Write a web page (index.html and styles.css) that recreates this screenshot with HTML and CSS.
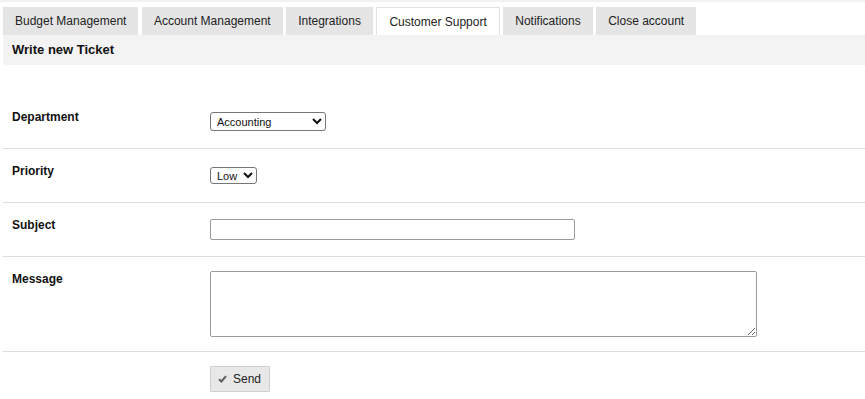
FILE: index.html
```html
<!DOCTYPE html>
<html lang="en">
<head>
    <meta charset="UTF-8">
    <meta name="viewport" content="width=device-width, initial-scale=1.0">
    <title>Customer Support</title>
    <link rel="stylesheet" href="styles.css">
</head>
<body>
    <div class="top-strip"></div>

    <div class="page">
        <nav class="tabs">
            <div class="tab">Budget Management</div>
            <div class="tab">Account Management</div>
            <div class="tab">Integrations</div>
            <div class="tab active">Customer Support</div>
            <div class="tab">Notifications</div>
            <div class="tab">Close account</div>
        </nav>

        <div class="panel-head">Write new Ticket</div>

        <form class="ticket-form" onsubmit="return false;">
            <div class="row">
                <label class="label" for="department">Department</label>
                <div class="field">
                    <select id="department" class="sel sel-dept">
                        <option>Accounting</option>
                        <option>Technical Support</option>
                        <option>Sales</option>
                    </select>
                </div>
            </div>
            <div class="row">
                <label class="label" for="priority">Priority</label>
                <div class="field">
                    <select id="priority" class="sel sel-prio">
                        <option>Low</option>
                        <option>Medium</option>
                        <option>High</option>
                    </select>
                </div>
            </div>
            <div class="row">
                <label class="label" for="subject">Subject</label>
                <div class="field">
                    <input id="subject" class="text-input" type="text">
                </div>
            </div>
            <div class="row">
                <label class="label" for="message">Message</label>
                <div class="field">
                    <textarea id="message" class="text-area"></textarea>
                </div>
            </div>
            <div class="row row-last">
                <div class="label"></div>
                <div class="field">
                    <button class="btn" type="submit">
                        <svg class="check" width="9" height="8" viewBox="0 0 9 8">
                            <path d="M1 4.2 L3.4 6.5 L8 1.2" fill="none" stroke="#5f5f5f" stroke-width="2"/>
                        </svg>
                        Send
                    </button>
                </div>
            </div>
        </form>
    </div>
</body>
</html>
```

FILE: styles.css
```css
body {
    margin: 0;
    font-family: Arial, 'Liberation Sans', sans-serif;
    font-size: 12px;
    color: #222;
    background-color: #fff;
}
.top-strip {
    height: 2px;
    background-color: #f2f2f2;
}
.page {
    padding-left: 3px;
}
.tabs {
    display: flex;
    gap: 3.5px;
    padding-top: 5px;
}
.tab {
    height: 28px;
    line-height: 29px;
    padding: 0 12px;
    background-color: #e5e5e5;
    color: #222;
    box-sizing: border-box;
    cursor: pointer;
}
.tab.active {
    background-color: #fff;
    border: 1px solid #e2e2e2;
    border-bottom: none;
    line-height: 28px;
}
.panel-head {
    height: 30px;
    line-height: 29px;
    padding-left: 9px;
    background-color: #f3f3f3;
    border-bottom-left-radius: 3px;
    font-size: 13px;
    font-weight: bold;
    color: #111;
}
.ticket-form {
    margin-top: 30px;
}
.row {
    display: flex;
    align-items: center;
    min-height: 54px;
    box-sizing: border-box;
    padding: 14px 0;
    border-bottom: 1px solid #dedede;
}
.row-last {
    border-bottom: none;
}
.label {
    align-self: flex-start;
    width: 198px;
    padding-left: 9px;
    line-height: 17px;
    font-weight: bold;
    color: #111;
    flex-shrink: 0;
}
.field {
    display: flex;
    align-items: center;
}
.sel {
    font-family: Arial, 'Liberation Sans', sans-serif;
    font-size: 11px;
    color: #111;
    border: 1px solid #767676;
    border-radius: 3px;
    background-color: #fff;
    box-sizing: border-box;
    padding: 0 0 0 2px;
    margin: 0;
}
.sel-dept {
    width: 116px;
    height: 19px;
}
.sel-prio {
    width: 47px;
    height: 17px;
}
.text-input {
    width: 365px;
    height: 21px;
    box-sizing: border-box;
    border: 1px solid #9a9a9a;
    border-radius: 2px;
    margin: 0;
}
.text-area {
    display: block;
    width: 547px;
    height: 66px;
    box-sizing: border-box;
    border: 1px solid #9a9a9a;
    border-radius: 2px;
    margin: 0;
    font-family: Arial, 'Liberation Sans', sans-serif;
}
.btn {
    display: flex;
    align-items: center;
    gap: 6px;
    width: 60px;
    height: 26px;
    padding: 0 0 0 7px;
    box-sizing: border-box;
    background-color: #e8e8e8;
    border: 1px solid #cfcfcf;
    border-radius: 1px;
    font-family: Arial, 'Liberation Sans', sans-serif;
    font-size: 12px;
    color: #222;
    cursor: pointer;
}
.check {
    display: block;
}
```
